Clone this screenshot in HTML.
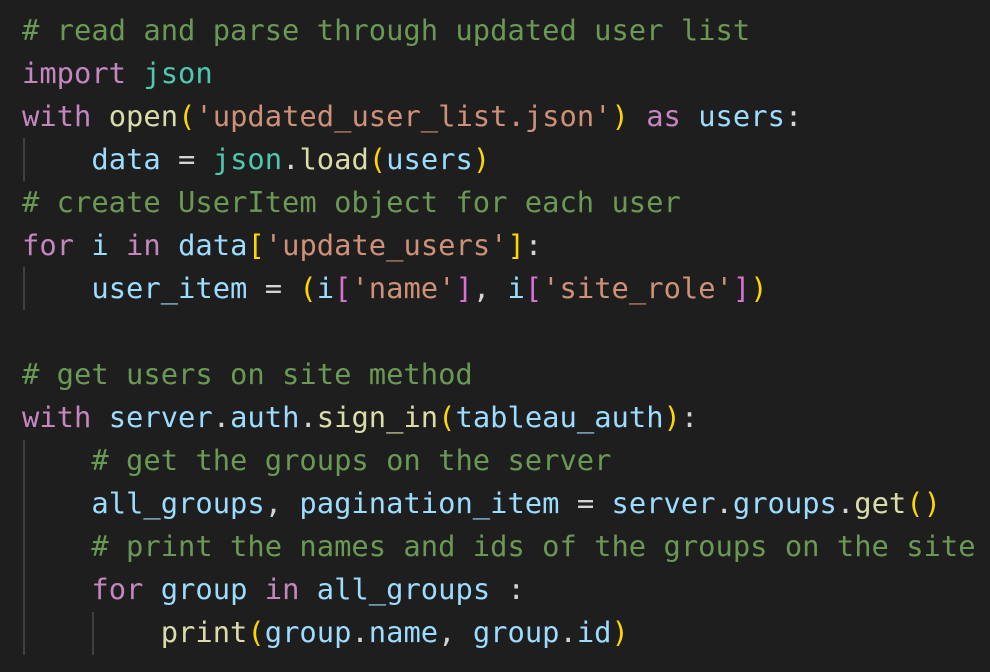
<!DOCTYPE html>
<html><head><meta charset="utf-8"><style>
html,body{margin:0;padding:0;background:#1e1e1e;width:990px;height:672px;overflow:hidden}
pre{margin:0;padding:9px 0 0 22px;font-family:"DejaVu Sans Mono",monospace;font-size:28.8px;line-height:43px;color:#d4d4d4;position:relative;z-index:1}
.c{color:#6a9955}.k{color:#c586c0}.m{color:#4ec9b0}.f{color:#dcdcaa}.s{color:#ce9178}.v{color:#9cdcfe}.y{color:#ffd700}.p{color:#da70d6}
.g{position:absolute;width:2px;background:#404040}
</style></head><body>
<div class="g" style="left:23px;top:138px;height:43px"></div>
<div class="g" style="left:23px;top:267px;height:43px"></div>
<div class="g" style="left:23px;top:440px;height:215px"></div>
<div class="g" style="left:92px;top:612px;height:43px"></div>
<pre><span class="c"># read and parse through updated user list</span>
<span class="k">import</span> <span class="m">json</span>
<span class="k">with</span> <span class="f">open</span><span class="y">(</span><span class="s">'updated_user_list.json'</span><span class="y">)</span> <span class="k">as</span> <span class="v">users</span>:
    <span class="v">data</span> = <span class="m">json</span>.<span class="f">load</span><span class="y">(</span><span class="v">users</span><span class="y">)</span>
<span class="c"># create UserItem object for each user</span>
<span class="k">for</span> <span class="v">i</span> <span class="k">in</span> <span class="v">data</span><span class="y">[</span><span class="s">'update_users'</span><span class="y">]</span>:
    <span class="v">user_item</span> = <span class="y">(</span><span class="v">i</span><span class="p">[</span><span class="s">'name'</span><span class="p">]</span>, <span class="v">i</span><span class="p">[</span><span class="s">'site_role'</span><span class="p">]</span><span class="y">)</span>

<span class="c"># get users on site method</span>
<span class="k">with</span> <span class="v">server</span>.<span class="v">auth</span>.<span class="f">sign_in</span><span class="y">(</span><span class="v">tableau_auth</span><span class="y">)</span>:
    <span class="c"># get the groups on the server</span>
    <span class="v">all_groups</span>, <span class="v">pagination_item</span> = <span class="v">server</span>.<span class="v">groups</span>.<span class="f">get</span><span class="y">()</span>
    <span class="c"># print the names and ids of the groups on the site</span>
    <span class="k">for</span> <span class="v">group</span> <span class="k">in</span> <span class="v">all_groups</span> :
        <span class="f">print</span><span class="y">(</span><span class="v">group</span>.<span class="v">name</span>, <span class="v">group</span>.<span class="v">id</span><span class="y">)</span></pre>
</body></html>
